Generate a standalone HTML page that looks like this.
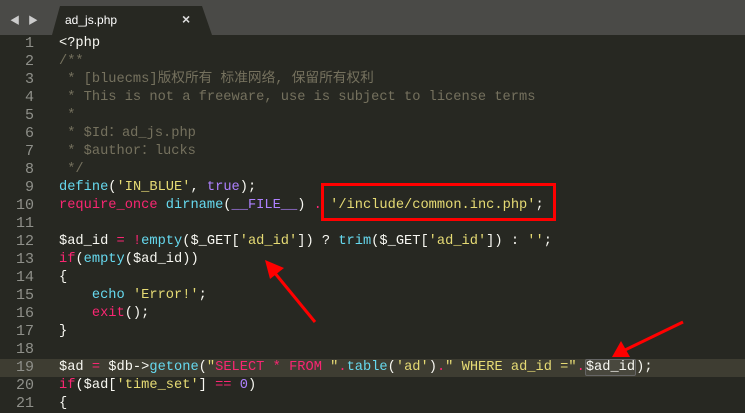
<!DOCTYPE html>
<html><head><meta charset="utf-8"><style>
body{margin:0;width:745px;height:408px;overflow:hidden;background:#272822;position:relative;font-family:"Liberation Mono","Noto Sans CJK SC",monospace}
.top{position:absolute;left:0;top:0;width:745px;height:35px;background:#4a4a47}
.tab{position:absolute;left:52px;top:6px;width:160px;height:29px;background:#272822;clip-path:polygon(0 100%,8px 0,150px 0,160px 100%)}
.tabt{position:absolute;left:65px;top:13px;font:12px "Liberation Sans",sans-serif;color:#fff}
.x{position:absolute;left:182px;top:11px;font:bold 14px "Liberation Sans",sans-serif;color:#ddd}
.nav{position:absolute;left:10px;top:12px;color:#ccc;font-size:10px;letter-spacing:1px}
.g{position:absolute;left:0;top:35px;width:34px;text-align:right;color:#8f908a;font-size:15px;line-height:18px;white-space:pre}
.c{position:absolute;left:59px;top:35px;color:#f8f8f2;font-size:13.7px;line-height:18px;white-space:pre}
.hl{position:absolute;left:0;top:359px;width:745px;height:18px;background:#3e3d32}
.k{color:#f92672}.f{color:#66d9ef}.s{color:#e6db74}.m{color:#75715e}.p{color:#ae81ff}
.sel{background:#49483e;border:1px solid #666;border-radius:2px}
.box{position:absolute;left:321px;top:183px;width:229px;height:32px;border:3px solid #f00}
</style></head><body>
<div class="top"></div><div class="tab"></div>
<div class="nav">◀ ▶</div><div class="tabt">ad_js.php</div><div class="x">×</div>
<div class="hl"></div>
<div class="g">1
2
3
4
5
6
7
8
9
10
11
12
13
14
15
16
17
18
19
20
21</div>
<div class="c">&lt;?php
<span class="m">/**
 * [bluecms]版权所有 标准网络, 保留所有权利
 * This is not a freeware, use is subject to license terms
 *
 * $Id：ad_js.php
 * $author：lucks
 */</span>
<span class="f">define</span>(<span class="s">'IN_BLUE'</span>, <span class="p">true</span>);
<span class="k">require_once</span> <span class="f">dirname</span>(<span class="p">__FILE__</span>) <span class="k">.</span> <span class="s">'/include/common.inc.php'</span>;

$ad_id <span class="k">=</span> <span class="k">!</span><span class="f">empty</span>($_GET[<span class="s">'ad_id'</span>]) ? <span class="f">trim</span>($_GET[<span class="s">'ad_id'</span>]) : <span class="s">''</span>;
<span class="k">if</span>(<span class="f">empty</span>($ad_id))
{
    <span class="f">echo</span> <span class="s">'Error!'</span>;
    <span class="k">exit</span>();
}

$ad <span class="k">=</span> $db-&gt;<span class="f">getone</span>(<span class="s">"</span><span class="k">SELECT</span> <span class="k">*</span> <span class="k">FROM</span> <span class="s">"</span><span class="k">.</span><span class="f">table</span>(<span class="s">'ad'</span>)<span class="k">.</span><span class="s">" WHERE ad_id ="</span><span class="k">.</span><span class="sel">$ad_id</span>);
<span class="k">if</span>($ad[<span class="s">'time_set'</span>] <span class="k">==</span> <span class="p">0</span>)
{</div>
<div class="box"></div>
<svg style="position:absolute;left:0;top:0" width="745" height="408">
<g stroke="#f00" stroke-width="3" fill="#f00">
<line x1="315" y1="322" x2="274" y2="272"/>
<polygon points="265,260 284,268 270,279" stroke="none"/>
<line x1="683" y1="322" x2="625" y2="350"/>
<polygon points="612,357 621,341 630,357" stroke="none"/>
</g></svg>
</body></html>
